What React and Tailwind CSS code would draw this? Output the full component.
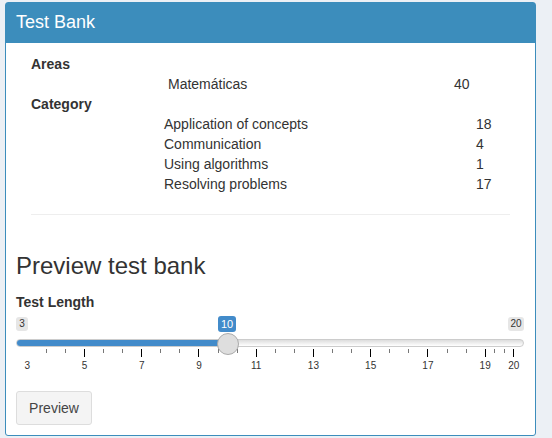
import React from "react";

const areas = [{ name: "Matemáticas", count: 40 }];
const categories = [
  { name: "Application of concepts", count: 18 },
  { name: "Communication", count: 4 },
  { name: "Using algorithms", count: 1 },
  { name: "Resolving problems", count: 17 },
];

// slider geometry (px inside the 508px track)
const MIN = 3;
const MAX = 20;
const VALUE = 10;
const PAD = 10.7;
const UNIT = (508 - PAD * 2) / (MAX - MIN);
const pos = (v) => PAD + (v - MIN) * UNIT;

const majors = [5, 7, 9, 11, 13, 15, 17, 19, 20];
const labels = [3, 5, 7, 9, 11, 13, 15, 17, 19, 20];
const minors = [];
for (let v = 3; v < 19; v += 2) {
  minors.push(v + 2 / 3, v + 4 / 3);
}
minors.push(19 + 1 / 3, 19 + 2 / 3);

const Slider = () => (
  <div className="relative w-[508px] h-[60px]">
    <div className="flex justify-between pt-[2px]">
      <span className="h-[14px] w-[12px] rounded-[3px] bg-[#e6e6e6] text-[10px] leading-[14px] text-center text-[#333]">
        {MIN}
      </span>
      <span className="h-[14px] w-[16px] rounded-[3px] bg-[#e6e6e6] text-[10px] leading-[14px] text-center text-[#333]">
        {MAX}
      </span>
    </div>
    <span
      className="absolute top-[1px] h-[16px] w-[18px] -translate-x-1/2 rounded-[3px] bg-[#428bca] text-[11px] leading-[16px] text-center text-white"
      style={{ left: pos(VALUE) }}
    >
      {VALUE}
    </span>

    <div className="mt-[8px] h-[8px] w-[508px] overflow-hidden rounded-full border border-[#cccccc] bg-gradient-to-b from-[#dddddd] to-[#ffffff]">
      <div className="h-full bg-[#428bca]" style={{ width: pos(VALUE) }} />
    </div>

    {majors.map((v) => (
      <div
        key={"M" + v}
        className="absolute top-[34px] h-[8px] w-px bg-[#000]"
        style={{ left: Math.round(pos(v)) }}
      />
    ))}
    {minors.map((v, i) => (
      <div
        key={"m" + i}
        className="absolute top-[34px] h-[4px] w-px bg-[#777]"
        style={{ left: Math.round(pos(v)) }}
      />
    ))}
    {labels.map((v) => (
      <span
        key={"l" + v}
        className="absolute top-[45px] -translate-x-1/2 text-[10px] leading-[12px] text-[#333]"
        style={{ left: pos(v) + 0.5 }}
      >
        {v}
      </span>
    ))}

    <div
      className="absolute top-[18px] h-[22px] w-[22px] -translate-x-1/2 rounded-full border border-[#ababab] bg-[#dedede]"
      style={{ left: pos(VALUE) + 1 }}
    />
  </div>
);

const App = () => {
  return (
    <div className="h-[438px] bg-[#ecf0f5] pt-[2px] pl-[5px] font-['Liberation_Sans',Arial,sans-serif] text-[#333]">
      <div className="w-[531px] rounded-[3px] border border-[#3c8dbc] bg-white">
        <div className="bg-[#3c8dbc] px-[10px] pt-[9px] pb-[11px] text-[18px] leading-[20px] text-white">
          Test Bank
        </div>

        <div className="px-[10px] pt-[11px] pb-[10px]">
          {/* summary */}
          <div className="px-[15px] text-[14px] leading-[20px]">
            <div className="font-bold">Areas</div>
            {areas.map((a) => (
              <div key={a.name} className="flex pl-[137px]">
                <span className="w-[286px]">{a.name}</span>
                <span>{a.count}</span>
              </div>
            ))}
            <div className="font-bold">Category</div>
            {categories.map((c) => (
              <div key={c.name} className="flex pl-[133px]">
                <span className="w-[312px]">{c.name}</span>
                <span>{c.count}</span>
              </div>
            ))}
            <hr className="mt-[20px] border-t border-[#eeeeee]" />
          </div>

          {/* preview */}
          <h3 className="mt-[38px] text-[24px] leading-[26px] text-[#333]">
            Preview test bank
          </h3>
          <div className="mt-[13px] text-[14px] font-bold leading-[20px]">
            Test Length
          </div>
          <div className="mt-[3px]">
            <Slider />
          </div>
          <button className="mt-[16px] h-[34px] w-[76px] rounded-[3px] border border-[#dddddd] bg-[#f4f4f4] text-[14px] text-[#444]">
            Preview
          </button>
        </div>
      </div>
    </div>
  );
};

export default App;
